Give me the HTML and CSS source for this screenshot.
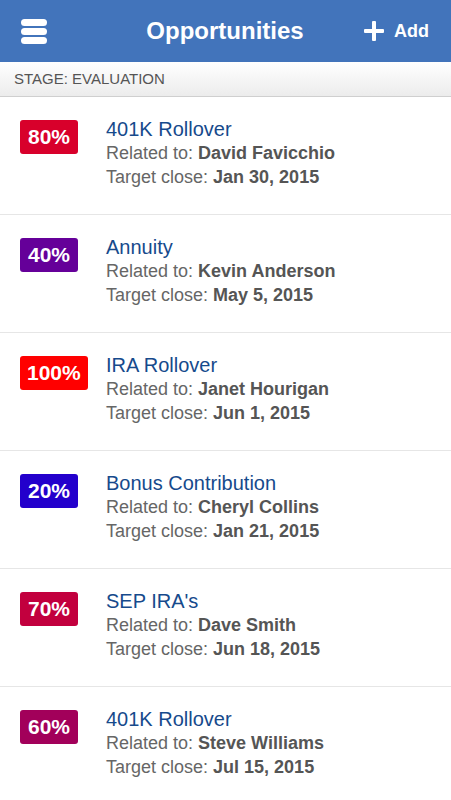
FILE: index.html
```html
<!DOCTYPE html>
<html>
<head>
<meta charset="utf-8">
<link rel="stylesheet" href="styles.css">
</head>
<body>
<header class="topbar">
  <div class="menu">
    <svg width="26" height="25" viewBox="0 0 26 25"><rect x="0" y="0" width="26" height="7" rx="3.5" fill="#fff"/><rect x="0" y="9" width="26" height="7" rx="3.5" fill="#fff"/><rect x="0" y="18" width="26" height="7" rx="3.5" fill="#fff"/></svg>
  </div>
  <div class="title">Opportunities</div>
  <div class="add">
    <svg width="20" height="20" viewBox="0 0 20 20"><rect x="8" y="0" width="4" height="20" rx="1" fill="#fff"/><rect x="0" y="8" width="20" height="4" rx="1" fill="#fff"/></svg>
    <span>Add</span>
  </div>
</header>
<div class="stage">STAGE: EVALUATION</div>
<ul class="list">
  <li class="item"><div class="badgecol"><span class="badge c80">80%</span></div><div class="info"><div class="name">401K Rollover</div><div class="line">Related to: <b>David Favicchio</b></div><div class="line">Target close: <b>Jan 30, 2015</b></div></div></li>
  <li class="item"><div class="badgecol"><span class="badge c40">40%</span></div><div class="info"><div class="name">Annuity</div><div class="line">Related to: <b>Kevin Anderson</b></div><div class="line">Target close: <b>May 5, 2015</b></div></div></li>
  <li class="item"><div class="badgecol"><span class="badge c100">100%</span></div><div class="info"><div class="name">IRA Rollover</div><div class="line">Related to: <b>Janet Hourigan</b></div><div class="line">Target close: <b>Jun 1, 2015</b></div></div></li>
  <li class="item"><div class="badgecol"><span class="badge c20">20%</span></div><div class="info"><div class="name">Bonus Contribution</div><div class="line">Related to: <b>Cheryl Collins</b></div><div class="line">Target close: <b>Jan 21, 2015</b></div></div></li>
  <li class="item"><div class="badgecol"><span class="badge c70">70%</span></div><div class="info"><div class="name">SEP IRA's</div><div class="line">Related to: <b>Dave Smith</b></div><div class="line">Target close: <b>Jun 18, 2015</b></div></div></li>
  <li class="item"><div class="badgecol"><span class="badge c60">60%</span></div><div class="info"><div class="name">401K Rollover</div><div class="line">Related to: <b>Steve Williams</b></div><div class="line">Target close: <b>Jul 15, 2015</b></div></div></li>
</ul>
</body>
</html>
```

FILE: styles.css
```css
html, body {
  margin: 0;
  padding: 0;
  background: #fff;
  font-family: "Liberation Sans", Arial, sans-serif;
}
.topbar {
  height: 62px;
  background: #4274bb;
  display: flex;
  align-items: center;
  color: #fff;
}
.menu {
  width: 26px;
  height: 25px;
  margin-left: 21px;
  display: flex;
}
.title {
  flex: 1;
  text-align: center;
  font-size: 24px;
  font-weight: bold;
  margin-left: 39px;
}
.add {
  display: flex;
  align-items: center;
  margin-right: 22px;
  font-size: 18px;
  font-weight: bold;
}
.add svg {
  margin-right: 10px;
  display: block;
}
.stage {
  height: 34px;
  border-bottom: 1px solid #cfcfcf;
  background: linear-gradient(#ffffff, #ececec);
  color: #555;
  font-size: 15px;
  line-height: 33px;
  padding-left: 14px;
}
.list {
  list-style: none;
  margin: 0;
  padding: 0;
}
.item {
  display: flex;
  padding: 20px 0 25px 20px;
  border-bottom: 1px solid #e6e6e6;
}
.badgecol {
  width: 86px;
  flex: none;
  padding-top: 3px;
}
.badge {
  display: inline-block;
  height: 34px;
  line-height: 34px;
  padding: 0 7px;
  min-width: 44px;
  text-align: center;
  border-radius: 3px;
  color: #fff;
  font-size: 21px;
  font-weight: bold;
}
.c80 { background: #d8002b; }
.c40 { background: #650099; }
.c100 { background: #ff0000; }
.c20 { background: #2300cc; }
.c70 { background: #c2003e; }
.c60 { background: #a2005a; }
.name {
  color: #164a8c;
  font-size: 20px;
  line-height: 24px;
}
.line {
  color: #666;
  font-size: 18px;
  line-height: 24px;
}
.line b {
  color: #555;
}
```
